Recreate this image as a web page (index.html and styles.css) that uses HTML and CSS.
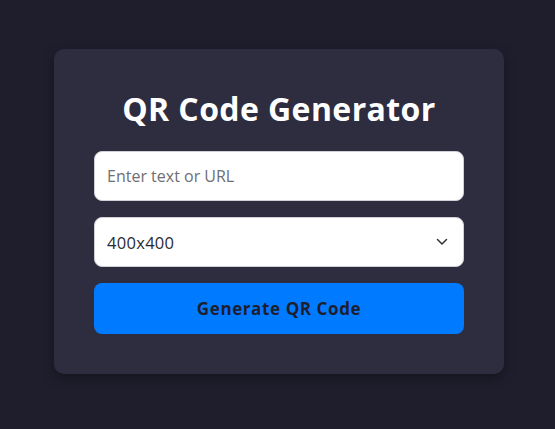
FILE: index.html
```html
<!DOCTYPE html>
<html lang="en">
<head>
<meta charset="utf-8">
<title>QR Code Generator</title>
<link rel="stylesheet" href="styles.css">
</head>
<body>
<main class="card">
  <h1 class="title">QR Code Generator</h1>
  <input class="field" type="text" placeholder="Enter text or URL">
  <div class="select-wrap">
    <select class="field select">
      <option>400x400</option>
      <option>200x200</option>
      <option>300x300</option>
    </select>
    <svg class="chevron" width="12" height="8" viewBox="0 0 12 8" aria-hidden="true"><path d="M1.5 1.5 L6 6 L10.5 1.5" fill="none" stroke="#333338" stroke-width="1.5" stroke-linecap="round" stroke-linejoin="round"/></svg>
  </div>
  <button class="btn" type="button">Generate QR Code</button>
</main>
</body>
</html>
```

FILE: styles.css
```css
* { box-sizing: border-box; }
html, body { margin: 0; height: 100%; }
body {
  background: #1f1e2d;
  font-family: "Open Sans", "DejaVu Sans", sans-serif;
  display: flex;
  align-items: center;
  justify-content: center;
  padding: 0 0 6px 3px;
}
.card {
  width: 450px;
  background: #2e2d3f;
  border-radius: 10px;
  padding: 40px;
  box-shadow: 0 4px 12px rgba(0, 0, 0, 0.35);
  display: flex;
  flex-direction: column;
  gap: 16px;
}
.title {
  margin: 0 0 6px;
  color: #ffffff;
  font-size: 32px;
  font-weight: 700;
  letter-spacing: 0.4px;
  line-height: 40px;
  text-align: center;
}
.field {
  display: block;
  width: 100%;
  height: 50px;
  border: 1px solid #cfcfd4;
  border-radius: 8px;
  background: #ffffff;
  padding: 0 12px;
  font-family: inherit;
  font-size: 16px;
  color: #2a2a33;
  outline: none;
}
.field::placeholder { color: #6e6e73; }
.select-wrap { position: relative; }
.select { appearance: none; -webkit-appearance: none; font-size: 16.5px; letter-spacing: 0.3px; }
.chevron { position: absolute; right: 16px; top: 21px; pointer-events: none; }
.btn {
  height: 51px;
  border: none;
  border-radius: 8px;
  background: #007bff;
  color: #1e1e2e;
  font-family: inherit;
  font-size: 17px;
  font-weight: 700;
  letter-spacing: 0.6px;
}
```
